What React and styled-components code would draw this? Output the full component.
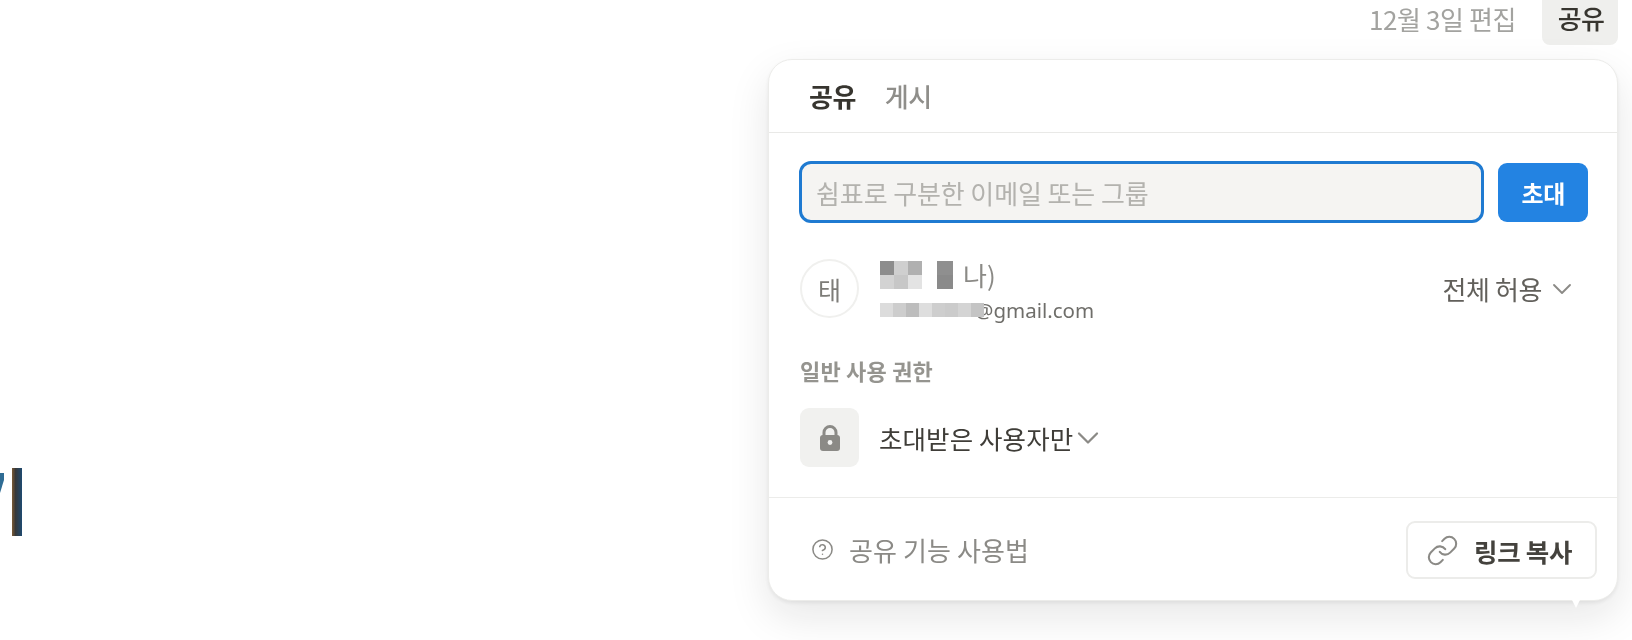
import React from "react";
import styled, { createGlobalStyle } from "styled-components";
import { ChevronDown, CircleHelp, Link } from "lucide-react";

const KR = `"Noto Sans CJK KR", "Noto Sans", sans-serif`;

const Global = createGlobalStyle`
  html, body {
    margin: 0;
    padding: 0;
    background: #fff;
    overflow: hidden;
  }
  * {
    box-sizing: border-box;
  }
`;

const Page = styled.div`
  width: 1632px;
  height: 640px;
  display: flex;
  font-family: ${KR};
  filter: blur(0.6px);
`;

const TitleArea = styled.div`
  width: 768px;
  padding-top: 468px;
  display: flex;
  align-items: flex-start;
`;

const GlyphStub = styled.div`
  width: 4px;
  height: 20px;
  margin-top: 5px;
  background: #2f6c94;
  clip-path: polygon(0 0, 100% 0, 100% 35%, 0 100%);
`;

const Caret = styled.div`
  width: 10px;
  height: 68px;
  margin-left: 8px;
  background: linear-gradient(90deg, #7a5a35 0%, #37393a 35%, #1f4a70 100%);
`;

const Side = styled.div`
  width: 850px;
`;

const TopBar = styled.header`
  height: 59px;
  display: flex;
  justify-content: flex-end;
  align-items: flex-start;
`;

const EditedAt = styled.span`
  margin-top: 3px;
  margin-right: 26px;
  font-size: 26px;
  line-height: 32px;
  letter-spacing: -0.4px;
  color: #a3a3a0;
`;

const ShareButton = styled.button`
  width: 76px;
  height: 45px;
  border: 0;
  border-radius: 0 0 8px 8px;
  background: #efefed;
  color: #37352f;
  font: 500 26px/36px ${KR};
  letter-spacing: -0.6px;
  padding: 0 0 10px 2px;
`;

const Panel = styled.section`
  position: relative;
  height: 542px;
  border: 1px solid #ececea;
  border-radius: 24px;
  background: #fff;
  box-shadow: 0 16px 42px rgba(15, 15, 15, 0.1), 0 2px 4px rgba(15, 15, 15, 0.07);
  display: flex;
  flex-direction: column;

  &::after {
    content: "";
    position: absolute;
    right: 37px;
    bottom: -8px;
    border-left: 4px solid transparent;
    border-right: 4px solid transparent;
    border-top: 8px solid #fff;
  }
`;

const Tabs = styled.nav`
  height: 73px;
  padding: 0 0 2px 40px;
  display: flex;
  align-items: center;
  gap: 29px;
  border-bottom: 1px solid #e9e9e7;
`;

const Tab = styled.span`
  font-size: 26px;
  font-weight: ${(p) => (p.$active ? 700 : 500)};
  letter-spacing: -0.5px;
  color: ${(p) => (p.$active ? "#37352f" : "#8f8e8a")};
`;

const Body = styled.div`
  flex: 1;
  padding: 28px 29px 0 31px;
`;

const InviteRow = styled.div`
  display: flex;
  align-items: center;
  gap: 14px;
`;

const EmailField = styled.div`
  width: 688px;
  height: 62px;
  margin-left: -1px;
  border: 3px solid #1f7ad1;
  border-radius: 12px;
  background: #f5f4f2;
  padding: 0 14px;
  display: flex;
  align-items: center;
  font-size: 26px;
  letter-spacing: -0.1px;
  color: #b3b2ae;
`;

const InviteButton = styled.button`
  width: 90px;
  height: 59px;
  border: 0;
  border-radius: 9px;
  background: #2383e2;
  color: #fff;
  font: 700 24px ${KR};
  letter-spacing: -0.4px;
`;

const MemberRow = styled.div`
  margin-top: 36px;
  display: flex;
  align-items: flex-start;
`;

const Avatar = styled.div`
  width: 59px;
  height: 59px;
  border: 2px solid #f0f0ee;
  border-radius: 50%;
  display: flex;
  align-items: center;
  justify-content: center;
  font-size: 25px;
  color: #7d7c78;
`;

const MemberInfo = styled.div`
  margin-left: 21px;
  flex: 1;
`;

const NameLine = styled.div`
  height: 28px;
  margin-top: 2px;
  display: flex;
  align-items: flex-start;
`;

const Mosaic = styled.div`
  position: relative;
  display: grid;
  grid-template-columns: repeat(${(p) => p.$cols}, ${(p) => p.$w}px);
  grid-auto-rows: 14px;
  margin-right: ${(p) => p.$gap || 0}px;
`;

const Cell = styled.i`
  display: block;
  background: ${(p) => p.$c};
`;

const NameRest = styled.span`
  font-size: 26px;
  line-height: 28px;
  color: #8b8a86;
`;

const EmailLine = styled.div`
  display: flex;
  align-items: center;
  height: 24px;
  margin-top: 9px;
`;

const EmailText = styled.span`
  margin-left: -9px;
  font: 400 20.5px/24px "Noto Sans", sans-serif;
  color: #6f6e6a;
`;

const AccessSelect = styled.div`
  height: 59px;
  display: flex;
  align-items: center;
  gap: 4px;
  margin-right: 10px;
  font-size: 26px;
  letter-spacing: -0.4px;
  color: #62605b;
  svg {
    color: #8b8a86;
  }
`;

const SectionLabel = styled.div`
  margin-top: 33px;
  font-size: 22px;
  font-weight: 700;
  line-height: 30px;
  letter-spacing: 0.2px;
  color: #95948f;
`;

const GeneralRow = styled.div`
  margin-top: 23px;
  display: flex;
  align-items: center;
`;

const LockTile = styled.div`
  width: 59px;
  height: 59px;
  border-radius: 9px;
  background: #f1f1ef;
  display: flex;
  align-items: center;
  justify-content: center;
`;

const GeneralText = styled.span`
  margin-left: 20px;
  font-size: 25.5px;
  letter-spacing: 0.1px;
  color: #3f3d38;
`;

const GeneralChevron = styled(ChevronDown)`
  margin-left: -3px;
  color: #8b8a86;
`;

const Footer = styled.footer`
  height: 103px;
  border-top: 1px solid #ececea;
  padding: 23px 20px 0 42px;
  display: flex;
  align-items: flex-start;
  justify-content: space-between;
`;

const HelpLink = styled.div`
  margin-top: 10px;
  display: flex;
  align-items: center;
  gap: 15px;
  font-size: 26px;
  letter-spacing: 0.1px;
  color: #8b8a86;
`;

const CopyButton = styled.button`
  width: 191px;
  height: 58px;
  border: 2px solid #ececea;
  border-radius: 9px;
  background: #fff;
  display: flex;
  align-items: center;
  gap: 15px;
  padding: 0 0 0 18px;
  font: 700 25.5px ${KR};
  letter-spacing: -0.3px;
  color: #44423d;
  svg {
    color: #8b8a86;
    flex: none;
  }
`;

const nameA = ["#8d8d8d", "#cfcfcf", "#b0b0b0", "#d3d3d3", "#c7c7c7", "#e3e3e3"];
const nameB = ["#8f8f8f", "#8a8a8a"];
const emailCells = ["#dcdcdc", "#cdcdcd", "#bdbdbd", "#dedede", "#cecece", "#cbcbcb", "#d4d4d4", "#c4c4c4"];

const LockIcon = () => (
  <svg width="22" height="26" viewBox="0 0 22 26">
    <path
      d="M5 11V7.5a6 6 0 0 1 12 0V11"
      fill="none"
      stroke="#8b8a86"
      strokeWidth="3"
    />
    <rect x="1" y="10" width="20" height="16" rx="3" fill="#8b8a86" />
    <circle cx="11" cy="17.5" r="2.4" fill="#f1f1ef" />
  </svg>
);

export default function App() {
  return (
    <Page>
      <Global />
      <TitleArea>
        <GlyphStub />
        <Caret />
      </TitleArea>
      <Side>
        <TopBar>
          <EditedAt>12월 3일 편집</EditedAt>
          <ShareButton>공유</ShareButton>
        </TopBar>
        <Panel>
          <Tabs>
            <Tab $active>공유</Tab>
            <Tab>게시</Tab>
          </Tabs>
          <Body>
            <InviteRow>
              <EmailField>쉼표로 구분한 이메일 또는 그룹</EmailField>
              <InviteButton>초대</InviteButton>
            </InviteRow>
            <MemberRow>
              <Avatar>태</Avatar>
              <MemberInfo>
                <NameLine>
                  <Mosaic $cols={3} $w={14} $gap={15}>
                    {nameA.map((c, i) => (
                      <Cell key={i} $c={c} />
                    ))}
                  </Mosaic>
                  <Mosaic $cols={1} $w={16} $gap={10}>
                    {nameB.map((c, i) => (
                      <Cell key={i} $c={c} />
                    ))}
                  </Mosaic>
                  <NameRest>나)</NameRest>
                </NameLine>
                <EmailLine>
                  <Mosaic $cols={8} $w={13}>
                    {emailCells.map((c, i) => (
                      <Cell key={i} $c={c} />
                    ))}
                  </Mosaic>
                  <EmailText>@gmail.com</EmailText>
                </EmailLine>
              </MemberInfo>
              <AccessSelect>
                전체 허용
                <ChevronDown size={32} strokeWidth={1.4} />
              </AccessSelect>
            </MemberRow>
            <SectionLabel>일반 사용 권한</SectionLabel>
            <GeneralRow>
              <LockTile>
                <LockIcon />
              </LockTile>
              <GeneralText>초대받은 사용자만</GeneralText>
              <GeneralChevron size={36} strokeWidth={1.5} />
            </GeneralRow>
          </Body>
          <Footer>
            <HelpLink>
              <CircleHelp size={23} strokeWidth={1.6} />
              공유 기능 사용법
            </HelpLink>
            <CopyButton>
              <Link size={33} strokeWidth={1.5} />
              링크 복사
            </CopyButton>
          </Footer>
        </Panel>
      </Side>
    </Page>
  );
}
